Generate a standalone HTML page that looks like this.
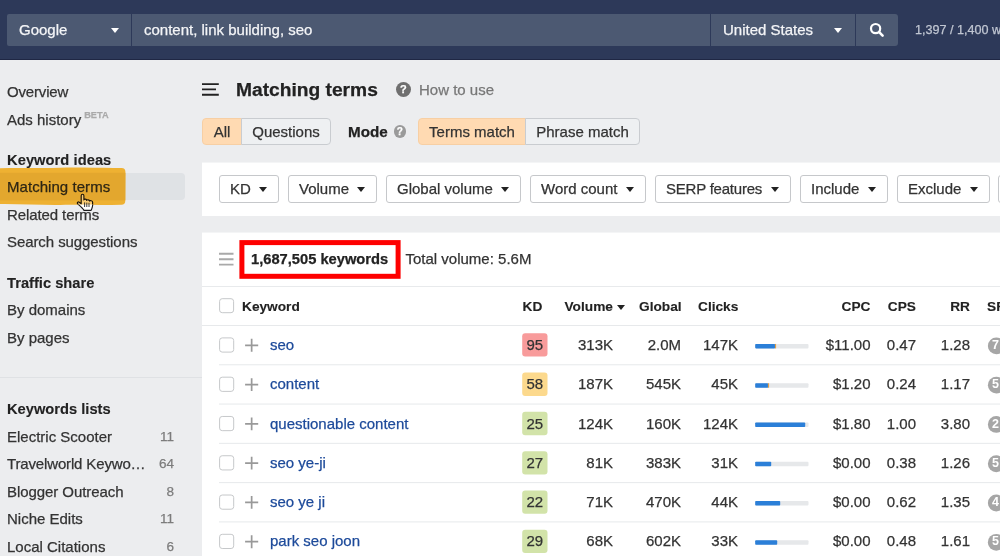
<!DOCTYPE html>
<html lang="en">
<head>
<meta charset="utf-8">
<title>Matching terms</title>
<style>
*{box-sizing:border-box;margin:0;padding:0}
html,body{width:1000px;height:556px;overflow:hidden}
body{position:relative;background:#ecedef;font-family:"Liberation Sans",sans-serif;font-size:15px;color:#333}
#wrap{position:absolute;left:0;top:0;width:1000px;height:556px;will-change:transform;-webkit-text-stroke:0.25px}
b,.b,.th,.bd{-webkit-text-stroke:0.12px}
.abs{position:absolute;white-space:nowrap}
#topbar{left:0;top:0;width:1000px;height:60px;background:#2d3959;border-bottom:1px solid #1f2744}
.tb{top:14px;height:32px;background:#4c5972;color:#f4f5f7;font-size:15px;line-height:31px}
.caret{position:absolute;width:0;height:0;border-left:4.3px solid transparent;border-right:4.3px solid transparent;border-top:5.6px solid #fff}
.side{left:7px;font-size:15px;line-height:20px;color:#333}
.side.b{font-weight:bold;color:#222;font-size:14.7px}
.cnt{font-size:13.5px;color:#7c7c7c;line-height:20px;text-align:right;width:30px;left:144px}
.tab{top:118px;height:27px;line-height:26px;font-size:15px;border:1px solid #c9ccd0;background:#eef0f2;color:#333;text-align:center}
.tab.on{background:#ffdab2;border-color:#f7cfa4}
.fbtn{top:175px;height:28px;line-height:26px;font-size:15px;border:1px solid #c6c8cb;border-radius:3px;background:#fff;color:#333;padding-left:10px}
.fbtn .caret{border-top-color:#222;border-left-width:4.2px;border-right-width:4.2px;border-top-width:5.2px;top:11px}
.panel{background:#fff;left:202px;width:798px}
.th{top:297px;font-size:13.7px;font-weight:bold;color:#222;line-height:20px}
.row{left:219px;width:781px;height:38px}
.cell{position:absolute;top:0;line-height:38px;font-size:15px;color:#333;white-space:nowrap}
.r{text-align:right}
.kw{color:#1d4a9a}
.kd{left:303.2px;width:25.3px;text-align:center}
.sf{left:773px;color:#fff;font-size:12.5px;font-weight:bold;-webkit-text-stroke:0}
</style>
</head>
<body>
<div id="wrap">
<div id="topbar" class="abs"></div>
<div class="abs tb" style="left:7px;width:124px;border-radius:2px 0 0 2px;padding-left:12px"><span id="t_google">Google</span><span class="caret" style="left:103.8px;top:13.6px"></span></div>
<div class="abs tb" style="left:132px;width:578px;padding-left:12px"><span id="t_query">content, link building, seo</span></div>
<div class="abs tb" style="left:711px;width:144px;padding-left:12px"><span id="t_country">United States</span><span class="caret" style="left:123.4px;top:13.6px"></span></div>
<div class="abs tb" style="left:856px;width:42px;border-radius:0 3px 3px 0">
<svg width="42" height="32" viewBox="0 0 42 32"><circle cx="19.6" cy="14.6" r="4.6" fill="none" stroke="#fff" stroke-width="2.2"/><path d="M23.2 18.2 L26.6 21.6" stroke="#fff" stroke-width="2.6" stroke-linecap="round"/></svg>
</div>
<div class="abs" style="left:915px;top:20px;font-size:12.6px;line-height:20px;color:#c0c6d2"><span id="t_quota">1,397 / 1,400 weekly</span></div>

<!-- sidebar -->
<div class="abs side" style="top:82px"><span id="t_overview" style="letter-spacing:-0.17px">Overview</span></div>
<div class="abs side" style="top:110px"><span id="t_ads">Ads history</span><span id="t_beta" style="font-size:9.2px;font-weight:bold;color:#aaa;position:relative;top:-7px;margin-left:3px">BETA</span></div>
<div class="abs side b" style="top:150px"><span id="t_kwideas" style="letter-spacing:0.05px">Keyword ideas</span></div>
<div class="abs" style="left:0;top:173px;width:185px;height:27px;background:#dfe2e5;border-radius:0 4px 4px 0"></div>
<svg class="abs" style="left:0;top:160px" width="140" height="60" viewBox="0 160 140 60"><defs><clipPath id="hl"><path d="M0 168.2 C20 167.5 40 168.4 60 167.8 S100 168.3 121.5 168 C124.3 168 125.4 169.6 125.4 171.8 L125.3 200.8 C125.3 203.3 124 204.7 121.5 204.8 C100 205.2 80 204.7 60 204.9 S20 203.9 0 204.1 Z"/></clipPath></defs><g clip-path="url(#hl)"><rect x="0" y="160" width="140" height="60" fill="#eeb132"/><rect x="0" y="172.8" width="140" height="27.6" fill="#e3a72e"/></g></svg>
<div class="abs side" style="top:177px;color:#2e2614"><span id="t_matching" style="letter-spacing:0.05px">Matching terms</span></div>
<div class="abs side" style="top:205px"><span id="t_related" style="letter-spacing:-0.1px">Related terms</span></div>
<svg class="abs" style="left:76px;top:193px" width="20" height="20" viewBox="0 0 20 20">
<defs><clipPath id="cu"><rect x="0" y="0" width="20" height="11.6"/></clipPath><clipPath id="cl"><rect x="0" y="11.6" width="20" height="9"/></clipPath>
</defs>
<path d="M5.2 2.7 C5.2 0.8 7.9 0.8 7.9 2.7 L7.9 7 C8.1 5.8 10.7 5.9 10.7 7.4 C11 6.4 13.5 6.6 13.5 8.1 C13.9 7.3 16.6 7.5 16.6 9.1 L16.6 12.6 C16.6 14.6 15.6 15.8 15.1 17.4 L8 17.4 C6.8 15.2 4.2 13 1.8 10.9 C0.7 9.8 2 8.4 3.2 9.2 L5.2 10.8 Z" fill="#f8cb74" stroke="#1c1408" stroke-width="1.15" stroke-linejoin="round" clip-path="url(#cu)"/>
<path d="M5.2 2.7 C5.2 0.8 7.9 0.8 7.9 2.7 L7.9 7 C8.1 5.8 10.7 5.9 10.7 7.4 C11 6.4 13.5 6.6 13.5 8.1 C13.9 7.3 16.6 7.5 16.6 9.1 L16.6 12.6 C16.6 14.6 15.6 15.8 15.1 17.4 L8 17.4 C6.8 15.2 4.2 13 1.8 10.9 C0.7 9.8 2 8.4 3.2 9.2 L5.2 10.8 Z" fill="#fff" stroke="#1c1c1c" stroke-width="1.15" stroke-linejoin="round" clip-path="url(#cl)"/>
<path d="M8.6 9.4V14M10.8 9.6V14M13 9.8V14" stroke="#222" stroke-width="0.9" fill="none"/>
</svg>
<div class="abs side" style="top:232px"><span id="t_search" style="letter-spacing:-0.08px">Search suggestions</span></div>
<div class="abs side b" style="top:273px"><span id="t_traffic">Traffic share</span></div>
<div class="abs side" style="top:300px"><span id="t_bydomains">By domains</span></div>
<div class="abs side" style="top:328px"><span id="t_bypages">By pages</span></div>
<div class="abs" style="left:0;top:377px;width:202px;height:1px;background:#dfe1e4"></div>
<div class="abs side b" style="top:399px"><span id="t_kwlists">Keywords lists</span></div>
<div class="abs side" style="top:427px"><span id="t_l1">Electric Scooter</span></div><div class="abs cnt" style="top:427px">11</div>
<div class="abs side" style="top:454px"><span id="t_l2" style="letter-spacing:-0.15px">Travelworld Keywo…</span></div><div class="abs cnt" style="top:454px">64</div>
<div class="abs side" style="top:482px"><span id="t_l3" style="letter-spacing:-0.07px">Blogger Outreach</span></div><div class="abs cnt" style="top:482px">8</div>
<div class="abs side" style="top:509px"><span id="t_l4">Niche Edits</span></div><div class="abs cnt" style="top:509px">11</div>
<div class="abs side" style="top:537px"><span id="t_l5">Local Citations</span></div><div class="abs cnt" style="top:537px">6</div>

<!-- heading -->
<svg class="abs" style="left:202px;top:82px" width="18" height="15" viewBox="0 0 18 15"><path d="M0 2.1h16.8M0 7.4h14M0 12.7h16.8" stroke="#222" stroke-width="1.9" fill="none"/></svg>
<div class="abs" style="left:236px;top:78px;font-size:19.2px;font-weight:bold;color:#222;line-height:24px"><span id="t_h1">Matching terms</span></div>
<div class="abs qm" style="left:396px;top:82px;width:14.5px;height:14.5px;border-radius:8px;background:#6f6f6f;color:#fff;font-size:11px;font-weight:bold;line-height:15px;text-align:center">?</div>
<div class="abs" style="left:419px;top:80px;font-size:15px;line-height:20px;color:#777"><span id="t_howto">How to use</span></div>

<!-- tabs -->
<div class="abs tab on" style="left:202px;width:40px;border-radius:4px 0 0 4px"><span id="t_all">All</span></div>
<div class="abs tab" style="left:241px;width:90px;border-radius:0 4px 4px 0"><span id="t_questions">Questions</span></div>
<div class="abs" style="left:348px;top:122px;font-size:15.2px;font-weight:bold;color:#222;line-height:20px"><span id="t_mode">Mode</span></div>
<div class="abs qm" style="left:393.5px;top:125px;width:12.5px;height:12.5px;border-radius:7px;background:#9a9a9a;color:#fff;font-size:10px;font-weight:bold;line-height:13px;text-align:center">?</div>
<div class="abs tab on" style="left:418px;width:108px;border-radius:4px 0 0 4px"><span id="t_terms">Terms match</span></div>
<div class="abs tab" style="left:525px;width:115px;border-radius:0 4px 4px 0"><span id="t_phrase">Phrase match</span></div>

<!-- filter panel -->
<div class="abs panel" style="top:162px;height:54px;border-top:1px solid #f4f5f6"></div>
<div class="abs fbtn" style="left:219px;width:60px"><span id="t_f1">KD</span><span class="caret" style="left:39px"></span></div>
<div class="abs fbtn" style="left:288px;width:89px"><span id="t_f2">Volume</span><span class="caret" style="left:68px"></span></div>
<div class="abs fbtn" style="left:386px;width:135px"><span id="t_f3">Global volume</span><span class="caret" style="left:114px"></span></div>
<div class="abs fbtn" style="left:530px;width:116px"><span id="t_f4">Word count</span><span class="caret" style="left:95px"></span></div>
<div class="abs fbtn" style="left:655px;width:136px"><span id="t_f5" style="letter-spacing:-0.22px">SERP features</span><span class="caret" style="left:115px"></span></div>
<div class="abs fbtn" style="left:800px;width:88px"><span id="t_f6">Include</span><span class="caret" style="left:67px"></span></div>
<div class="abs fbtn" style="left:897px;width:93px"><span id="t_f7">Exclude</span><span class="caret" style="left:72px"></span></div>
<div class="abs fbtn" style="left:998px;width:40px"></div>

<!-- table panel -->
<div class="abs panel" style="top:232px;height:324px;border-top:1px solid #f4f5f6"></div>
<svg class="abs" style="left:219px;top:252px" width="15" height="14" viewBox="0 0 15 14"><path d="M0 1.8h14.5M0 7.2h14.5M0 12.6h14.5" stroke="#a9a9a9" stroke-width="1.9" fill="none"/></svg>
<svg class="abs" style="left:235px;top:236px" width="172" height="48" viewBox="0 0 172 48"><rect x="6.9" y="6.6" width="156.2" height="33.7" fill="none" stroke="#fe0000" stroke-width="5"/></svg>
<div class="abs" style="left:251px;top:249px;font-size:14.7px;font-weight:bold;color:#222;line-height:20px"><span id="t_count">1,687,505 keywords</span></div>
<div class="abs" style="left:405.5px;top:249px;font-size:15px;color:#333;line-height:20px"><span id="t_total">Total volume: 5.6M</span></div>
<div class="abs" style="left:202px;top:286px;width:798px;height:1px;background:#e8eaec"></div>

<div class="abs th" style="left:242px"><span id="t_thk">Keyword</span></div>
<div class="abs th" style="left:522.5px"><span id="t_thkd">KD</span></div>
<div class="abs th" style="left:564.5px"><span id="t_thvol">Volume</span><span class="caret" style="border-top-color:#222;border-left-width:4.2px;border-right-width:4.2px;border-top-width:5px;left:52.3px;top:8.2px"></span></div>
<div class="abs th" style="left:639px"><span id="t_thglobal">Global</span></div>
<div class="abs th" style="left:698px"><span id="t_thclicks">Clicks</span></div>
<div class="abs th r" style="left:800px;width:70.5px"><span id="t_thcpc">CPC</span></div>
<div class="abs th r" style="left:850px;width:66px"><span id="t_thcps">CPS</span></div>
<div class="abs th r" style="left:900px;width:70px"><span id="t_thrr">RR</span></div>
<div class="abs th" style="left:987px"><span id="t_thsf">SF</span></div>

<svg class="abs" style="left:202px;top:290px" width="798" height="266" viewBox="202 290 798 266">
<rect x="219.6" y="298.7" width="14" height="14" rx="2.6" fill="#fff" stroke="#c6c8ca"/>
<rect x="202" y="325.00" width="798" height="1" fill="#e7e9eb"/>
<rect x="219.6" y="337.90" width="14.1" height="14.2" rx="2.6" fill="#fff" stroke="#c6c8ca"/>
<path d="M245.1 345.30H258.2M251.65 338.85V351.75" stroke="#999" stroke-width="1.7" fill="none"/>
<rect x="522.2" y="333.30" width="25.3" height="23.3" rx="3" fill="#f89b9b"/>
<rect x="755.2" y="343.95" width="53.3" height="4.45" rx="1" fill="#e6e8ea"/>
<rect x="755.2" y="343.95" width="20" height="4.45" rx="0.8" fill="#2b7fd8"/>
<rect x="774.9" y="343.95" width="1.2" height="4.45" fill="#e0a04a"/>
<circle cx="996.3" cy="345.90" r="8.4" fill="#a6a6a6"/>
<rect x="219" y="364.28" width="781" height="1" fill="#e7e9eb"/>
<rect x="219.6" y="377.18" width="14.1" height="14.2" rx="2.6" fill="#fff" stroke="#c6c8ca"/>
<path d="M245.1 384.58H258.2M251.65 378.13V391.03" stroke="#999" stroke-width="1.7" fill="none"/>
<rect x="522.2" y="372.58" width="25.3" height="23.3" rx="3" fill="#fcd98d"/>
<rect x="755.2" y="383.23" width="53.3" height="4.45" rx="1" fill="#e6e8ea"/>
<rect x="755.2" y="383.23" width="13" height="4.45" rx="0.8" fill="#2b7fd8"/>
<rect x="767.9" y="383.23" width="1.2" height="4.45" fill="#e0a04a"/>
<circle cx="996.3" cy="385.18" r="8.4" fill="#a6a6a6"/>
<rect x="219" y="403.56" width="781" height="1" fill="#e7e9eb"/>
<rect x="219.6" y="416.46" width="14.1" height="14.2" rx="2.6" fill="#fff" stroke="#c6c8ca"/>
<path d="M245.1 423.86H258.2M251.65 417.41V430.31" stroke="#999" stroke-width="1.7" fill="none"/>
<rect x="522.2" y="411.86" width="25.3" height="23.3" rx="3" fill="#d2e3a9"/>
<rect x="755.2" y="422.51" width="53.3" height="4.45" rx="1" fill="#e6e8ea"/>
<rect x="755.2" y="422.51" width="50" height="4.45" rx="0.8" fill="#2b7fd8"/>
<circle cx="996.3" cy="424.46" r="8.4" fill="#a6a6a6"/>
<rect x="219" y="442.84" width="781" height="1" fill="#e7e9eb"/>
<rect x="219.6" y="455.74" width="14.1" height="14.2" rx="2.6" fill="#fff" stroke="#c6c8ca"/>
<path d="M245.1 463.14H258.2M251.65 456.69V469.59" stroke="#999" stroke-width="1.7" fill="none"/>
<rect x="522.2" y="451.14" width="25.3" height="23.3" rx="3" fill="#d2e3a9"/>
<rect x="755.2" y="461.79" width="53.3" height="4.45" rx="1" fill="#e6e8ea"/>
<rect x="755.2" y="461.79" width="16" height="4.45" rx="0.8" fill="#2b7fd8"/>
<circle cx="996.3" cy="463.74" r="8.4" fill="#a6a6a6"/>
<rect x="219" y="482.12" width="781" height="1" fill="#e7e9eb"/>
<rect x="219.6" y="495.02" width="14.1" height="14.2" rx="2.6" fill="#fff" stroke="#c6c8ca"/>
<path d="M245.1 502.42H258.2M251.65 495.97V508.87" stroke="#999" stroke-width="1.7" fill="none"/>
<rect x="522.2" y="490.42" width="25.3" height="23.3" rx="3" fill="#d2e3a9"/>
<rect x="755.2" y="501.07" width="53.3" height="4.45" rx="1" fill="#e6e8ea"/>
<rect x="755.2" y="501.07" width="25" height="4.45" rx="0.8" fill="#2b7fd8"/>
<circle cx="996.3" cy="503.02" r="8.4" fill="#a6a6a6"/>
<rect x="219" y="521.40" width="781" height="1" fill="#e7e9eb"/>
<rect x="219.6" y="534.30" width="14.1" height="14.2" rx="2.6" fill="#fff" stroke="#c6c8ca"/>
<path d="M245.1 541.70H258.2M251.65 535.25V548.15" stroke="#999" stroke-width="1.7" fill="none"/>
<rect x="522.2" y="529.70" width="25.3" height="23.3" rx="3" fill="#d2e3a9"/>
<rect x="755.2" y="540.35" width="53.3" height="4.45" rx="1" fill="#e6e8ea"/>
<rect x="755.2" y="540.35" width="22" height="4.45" rx="0.8" fill="#2b7fd8"/>
<circle cx="996.3" cy="542.30" r="8.4" fill="#a6a6a6"/>
</svg>
<div class="abs row" style="top:326px"><span class="cell kw" style="left:51px">seo</span><span class="cell kd">95</span><span class="cell r" style="left:330px;width:64px">313K</span><span class="cell r" style="left:400px;width:62px">2.0M</span><span class="cell r" style="left:460px;width:59px">147K</span><span class="cell r" style="left:590px;width:61.5px">$11.00</span><span class="cell r" style="left:650px;width:47px">0.47</span><span class="cell r" style="left:700px;width:51px">1.28</span><span class="cell sf">7</span></div>
<div class="abs row" style="top:365px"><span class="cell kw" style="left:51px">content</span><span class="cell kd">58</span><span class="cell r" style="left:330px;width:64px">187K</span><span class="cell r" style="left:400px;width:62px">545K</span><span class="cell r" style="left:460px;width:59px">45K</span><span class="cell r" style="left:590px;width:61.5px">$1.20</span><span class="cell r" style="left:650px;width:47px">0.24</span><span class="cell r" style="left:700px;width:51px">1.17</span><span class="cell sf">5</span></div>
<div class="abs row" style="top:405px"><span class="cell kw" style="left:51px">questionable content</span><span class="cell kd">25</span><span class="cell r" style="left:330px;width:64px">124K</span><span class="cell r" style="left:400px;width:62px">160K</span><span class="cell r" style="left:460px;width:59px">124K</span><span class="cell r" style="left:590px;width:61.5px">$1.80</span><span class="cell r" style="left:650px;width:47px">1.00</span><span class="cell r" style="left:700px;width:51px">3.80</span><span class="cell sf">2</span></div>
<div class="abs row" style="top:444px"><span class="cell kw" style="left:51px">seo ye-ji</span><span class="cell kd">27</span><span class="cell r" style="left:330px;width:64px">81K</span><span class="cell r" style="left:400px;width:62px">383K</span><span class="cell r" style="left:460px;width:59px">31K</span><span class="cell r" style="left:590px;width:61.5px">$0.00</span><span class="cell r" style="left:650px;width:47px">0.38</span><span class="cell r" style="left:700px;width:51px">1.26</span><span class="cell sf">5</span></div>
<div class="abs row" style="top:483px"><span class="cell kw" style="left:51px">seo ye ji</span><span class="cell kd">22</span><span class="cell r" style="left:330px;width:64px">71K</span><span class="cell r" style="left:400px;width:62px">470K</span><span class="cell r" style="left:460px;width:59px">44K</span><span class="cell r" style="left:590px;width:61.5px">$0.00</span><span class="cell r" style="left:650px;width:47px">0.62</span><span class="cell r" style="left:700px;width:51px">1.35</span><span class="cell sf">4</span></div>
<div class="abs row" style="top:522px"><span class="cell kw" style="left:51px">park seo joon</span><span class="cell kd">29</span><span class="cell r" style="left:330px;width:64px">68K</span><span class="cell r" style="left:400px;width:62px">602K</span><span class="cell r" style="left:460px;width:59px">33K</span><span class="cell r" style="left:590px;width:61.5px">$0.00</span><span class="cell r" style="left:650px;width:47px">0.48</span><span class="cell r" style="left:700px;width:51px">1.61</span><span class="cell sf">5</span></div>
</div>
</body>
</html>
